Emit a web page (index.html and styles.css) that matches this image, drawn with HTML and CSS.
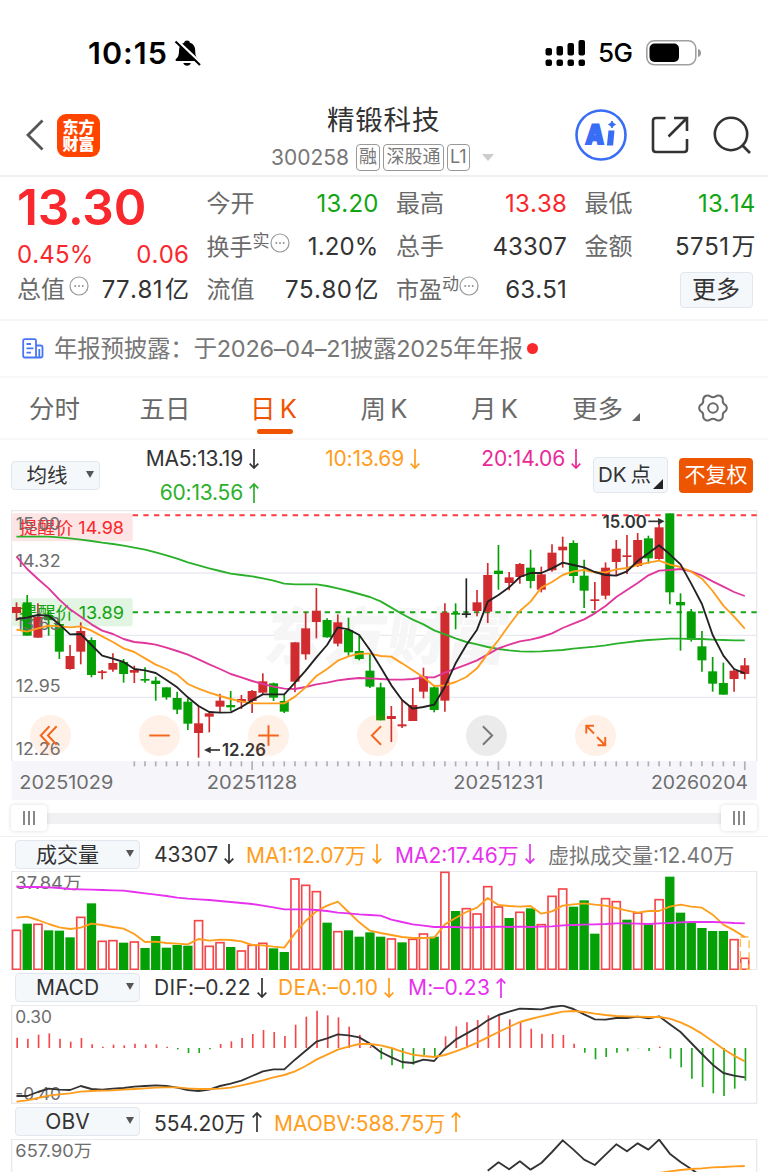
FILE: index.html
```html
<!DOCTYPE html>
<html lang="zh-CN">
<head>
  <meta charset="UTF-8" />
  <meta name="viewport" content="width=device-width, initial-scale=1.0" />
  <title>精锻科技 300258</title>
  <link rel="stylesheet" href="styles.css">
</head>
<body>
  <svg class="defs" width="0" height="0">
    <symbol id="down" viewBox="0 0 10 20"><path d="M5 0V19M.7 14.6L5 19l4.300-4.400" /></symbol>
    <symbol id="up" viewBox="0 0 10 20"><path d="M5 20V1M.7 5.400L5 1l4.300 4.400" /></symbol>
    <symbol id="dots" viewBox="0 0 20 20">
      <circle cx="10" cy="10" r="9" />
      <path d="M5.500 10h1.600M9.200 10h1.600M12.900 10h1.600" stroke-width="1.800" />
    </symbol>
  </svg>

  <!-- Phone status bar -->
  <div class="statusbar">
    <span class="time">10:15</span>
    <svg class="bell" width="27" height="28" viewBox="0 0 27 28">
      <path d="M13 1.500c1.700 0 2.600.9 2.900 2.200 3.700 1 5.300 4 5.300 8 0 5 1.300 6.600 3.200 8.300.6.600.3 1.900-.8 1.900H2.700c-1.200 0-1.500-1.300-.8-1.900 2-1.700 3.100-3.300 3.100-8.300 0-4 1.700-7 5.200-8C10.500 2.400 11.400 1.500 13 1.500zM9.300 24h7.500c-.4 1.700-1.900 2.800-3.700 2.800S9.800 25.700 9.300 24z" />
      <path d="M3 1.500L27 24" stroke="#fff" stroke-width="2.400" />
      <path d="M1.500 2.500L26 26" stroke="#000" stroke-width="2" />
    </svg>
    <svg class="signal" width="40" height="28" viewBox="0 0 40 28">
      <g>
        <rect x="0.500" y="9" width="6.500" height="7.500" rx="2" /><rect x="11.500" y="7" width="6.500" height="9.500" rx="2" />
        <rect x="22.500" y="4" width="6.500" height="12.500" rx="2" /><rect x="33.500" y="1" width="6.500" height="15.500" rx="2" />
        <rect x="0.500" y="20.500" width="6.500" height="6.500" rx="2" /><rect x="11.500" y="20.500" width="6.500" height="6.500" rx="2" />
        <rect x="22.500" y="20.500" width="6.500" height="6.500" rx="2" /><rect x="33.500" y="20.500" width="6.500" height="6.500" rx="2" />
      </g>
    </svg>
    <span class="net">5G</span>
    <svg class="battery" width="56" height="26" viewBox="0 0 56 26">
      <rect x=".8" y=".8" width="49" height="24" rx="7.500" fill="none" stroke="#a0a0a0" stroke-width="1.600" />
      <rect x="3.500" y="3.500" width="29.500" height="18.500" rx="5" />
      <path d="M52 9c2 .5 3 2 3 4s-1 3.500-3 4z" fill="#999" />
    </svg>
  </div>

  <!-- Title bar -->
  <div class="titlebar">
    <svg class="back" width="18" height="32" viewBox="0 0 18 32"><path d="M16.500 1.500L2 16l14.500 14.500" /></svg>
    <div class="logo">东方<br>财富</div>
    <div class="title">
      <h1>精锻科技</h1>
      <div class="code">
        <span>300258</span><i>融</i><i class="wide">深股通</i><i>L1</i><b class="caret"></b>
      </div>
    </div>
    <div class="tools">
      <svg width="52" height="52" viewBox="0 0 52 52">
        <circle cx="26" cy="26" r="24.500" fill="none" stroke="#3a6df6" stroke-width="2.600" />
        <text class="ai" x="10" y="35.500" textLength="18.500" lengthAdjust="spacingAndGlyphs" transform="skewX(-3) translate(2 0)">A</text>
        <path d="M33.500 21.500h6l-1.400 15h-6.200z" fill="#3a6df6" />
        <path d="M37 12l1.200 2.300 2.300 1.200-2.300 1.200L37 19l-1.200-2.300-2.300-1.200 2.300-1.200z" fill="#3a6df6" stroke="#3a6df6" />
      </svg>
      <svg class="line" width="38" height="38" viewBox="0 0 38 38">
        <path d="M14.500 2H5Q2 2 2 5V33Q2 36 5 36H33Q36 36 36 33V23M23 2H36V15M36 2L17.500 20.500" />
      </svg>
      <svg class="line" width="38" height="38" viewBox="0 0 38 38">
        <circle cx="18" cy="18" r="16.200" /><path d="M29 29l8 8" />
      </svg>
    </div>
  </div>

  <!-- Quote summary -->
  <div class="quote">
    <div class="col">
      <div class="price">13.30</div>
      <div class="cell change red"><span>0.45%</span><span>0.06</span></div>
      <div class="cell"><label>总值<svg class="dots"><use href="#dots" /></svg></label><span class="unit">77.81<em>亿</em></span></div>
    </div>
    <div class="col">
      <div class="cell"><label>今开</label><span class="green">13.20</span></div>
      <div class="cell"><label class="tight">换手<sup>实</sup><svg class="dots"><use href="#dots" /></svg></label><span>1.20%</span></div>
      <div class="cell"><label>流值</label><span class="unit">75.80<em>亿</em></span></div>
    </div>
    <div class="col">
      <div class="cell"><label>最高</label><span class="red">13.38</span></div>
      <div class="cell"><label>总手</label><span>43307</span></div>
      <div class="cell"><label class="tight">市盈<sup>动</sup><svg class="dots"><use href="#dots" /></svg></label><span>63.51</span></div>
    </div>
    <div class="col">
      <div class="cell"><label>最低</label><span class="green">13.14</span></div>
      <div class="cell"><label>金额</label><span class="unit">5751<em>万</em></span></div>
      <div class="cell end"><button class="more">更多</button></div>
    </div>
  </div>

  <div class="news">
    <svg width="22" height="21" viewBox="0 0 22 21">
      <path d="M1.200 2.700Q1.200 1.200 2.700 1.200H12.500Q14 1.200 14 2.700V19.500H2.700Q1.200 19.500 1.200 18zM14 7.500H18.500Q20.500 7.500 20.500 9.500V17.500Q20.500 19.500 18.500 19.500H14M17.300 11V19M4.500 6h4.500M4.500 10.300h7M4.500 14.600h4.500" />
    </svg>
    <span>年报预披露：于2026–04–21披露2025年年报</span>
    <b></b>
  </div>

  <!-- Period tabs -->
  <div class="tabs">
    <span>分时</span>
    <span>五日</span>
    <span class="active">日 K</span>
    <span>周 K</span>
    <span>月 K</span>
    <span class="drop">更多</span>
    <svg class="gear" width="30" height="30" viewBox="0 0 30 30">
      <g transform="rotate(90 15 15)">
        <path d="M12.200 2.200Q15 .2 17.800 2.200Q19.300 5.600 22.800 5.200Q26 5 27.200 8Q28.200 10.500 26.600 12.300Q24.800 15 26.600 17.700Q28.200 19.500 27.200 22Q26 25 22.800 24.800Q19.300 24.400 17.800 27.800Q15 29.800 12.200 27.800Q10.700 24.400 7.200 24.800Q4 25 2.800 22Q1.800 19.500 3.400 17.700Q5.200 15 3.400 12.300Q1.800 10.500 2.800 8Q4 5 7.200 5.200Q10.700 5.600 12.200 2.200z" />
      </g>
      <circle cx="15" cy="15" r="4.800" />
    </svg>
  </div>

  <div class="mabar">
    <button class="select short">均线</button>
    <div class="mas">
      <span>MA5:13.19<svg><use href="#down" /></svg></span>
      <span class="orange">10:13.69<svg><use href="#down" /></svg></span>
      <span class="pink">20:14.06<svg><use href="#down" /></svg></span>
      <span class="lime">60:13.56<svg><use href="#up" /></svg></span>
    </div>
    <button class="dk">DK 点</button>
    <button class="adjust">不复权</button>
  </div>

  <!-- Candles, drawn by chart.js; every chart uses 3 units per pixel -->
  <div class="kline">
    <svg id="kline" width="768" height="290" viewBox="0 15 2304 870"></svg>
    <div class="controls">
      <b><svg viewBox="0 0 40 40"><path d="M19 11l-8.500 9 8.500 9M26 11l-8.500 9 8.500 9" /></svg></b>
      <b><svg viewBox="0 0 40 40"><path d="M10 20h20" /></svg></b>
      <b><svg viewBox="0 0 40 40"><path d="M10 20h20M20 10v20" /></svg></b>
      <b><svg viewBox="0 0 40 40"><path d="M23.500 11l-9 9 9 9" /></svg></b>
      <b class="off"><svg viewBox="0 0 40 40"><path d="M16.500 11l9 9-9 9" /></svg></b>
      <b><svg viewBox="0 0 40 40"><path d="M18.500 10.500H11V18M11 10.500l7.500 7.500M29.500 21.500V29.500H22M29.500 29.500L21.500 21.500" /></svg></b>
    </div>
  </div>

  <div class="slider"><b></b><b></b></div>

  <div class="indicator first">
    <button class="select">成交量</button>
    <span class="v1">43307<svg><use href="#down" /></svg></span>
    <span class="v2 orange">MA1:12.07万<svg><use href="#down" /></svg></span>
    <span class="v3 magenta">MA2:17.46万<svg><use href="#down" /></svg></span>
    <span class="v4 gray">虚拟成交量:12.40万</span>
  </div>
  <svg id="volume" width="768" height="99" viewBox="0 109 2304 297"></svg>

  <div class="indicator macd">
    <button class="select">MACD</button>
    <span class="m1">DIF:–0.22<svg><use href="#down" /></svg></span>
    <span class="m2 orange">DEA:–0.10<svg><use href="#down" /></svg></span>
    <span class="m3 magenta">M:–0.23<svg><use href="#up" /></svg></span>
  </div>
  <svg id="macd" width="768" height="99" viewBox="0 511 2304 297"></svg>

  <div class="indicator">
    <button class="select">OBV</button>
    <span class="o1">554.20万<svg><use href="#up" /></svg></span>
    <span class="o2 orange">MAOBV:588.75万<svg><use href="#up" /></svg></span>
  </div>
  <svg id="obv" width="768" height="33" viewBox="0 913 2304 99"></svg>

  <script src="chart.js"></script>
</body>
</html>
```
FILE: styles.css
```css
* {
  box-sizing: border-box;
}
body {
  margin: 0;
  width: 768px;
  height: 1172px;
  overflow: hidden;
  background: #fff;
  color: #333;
  font-family: Inter, "Noto Sans CJK SC", sans-serif;
  font-size: 24px;
}
svg {
  display: block;
  flex: none;
}
.defs {
  position: absolute;
}
button {
  font: inherit;
  color: inherit;
  padding: 0;
  border: 1px solid #e2e6ee;
  border-radius: 4px;
  background: #f5f8fb;
}
i, b, em {
  font-style: normal;
}
.red { color: #f8282c; }
.green { color: #12a512; }
.orange { color: #ff9d1c; }
.pink { color: #e92a97; }
.lime { color: #2bb02b; }
.magenta { color: #e632ee; }
.gray { color: #777; }

/* Status bar */
.statusbar {
  display: flex;
  align-items: center;
  height: 88px;
  padding: 17px 0 0 88px;
  color: #000;
}
.time {
  width: 86px;
  font-size: 30.5px;
  font-weight: 600;
  letter-spacing: 1px;
}
.signal {
  margin-left: 344px;
}
.net {
  width: 48px;
  margin-left: 13px;
  font-size: 26px;
  font-weight: 500;
  letter-spacing: -0.5px;
}

/* Title bar */
.titlebar {
  display: flex;
  align-items: center;
  height: 89px;
  padding: 7px 17px 0 26px;
  border-bottom: 2px solid #efeff0;
}
.back {
  fill: none;
  stroke: #555;
  stroke-width: 2.8;
}
.logo {
  width: 43px;
  height: 43px;
  margin-left: 13px;
  padding-top: 4px;
  border-radius: 9px;
  background: #ff4400;
  color: #fff;
  font-family: "Noto Sans CJK SC", sans-serif;
  font-size: 16px;
  font-weight: 900;
  line-height: 17.5px;
  text-align: center;
}
.title {
  width: 228px;
  margin: 6px 0 0 171px;
}
h1 {
  margin: 0;
  padding-left: 56px;
  font-size: 27.5px;
  line-height: 38px;
  font-weight: 400;
  letter-spacing: 0.8px;
}
.code {
  display: flex;
  align-items: center;
  height: 36px;
  color: #777;
  font-size: 21px;
}
.code span {
  width: 85px;
}
.code i {
  height: 27px;
  margin-right: 3px;
  padding: 0 2px;
  border: 1.5px solid #999;
  border-radius: 4px;
  font-size: 18px;
  line-height: 23px;
}
.code .wide {
  padding: 0 2.5px;
}
.caret {
  margin-left: 9px;
  border: 6px solid transparent;
  border-top: 7px solid #ccc;
  border-bottom: 0;
}
.tools {
  display: flex;
  align-items: center;
  gap: 24px;
  margin-left: auto;
}
.line {
  fill: none;
  stroke: #333;
  stroke-width: 2.6;
}
.ai {
  fill: #3a6df6;
  stroke: #3a6df6;
  stroke-width: 2;
  font-size: 27px;
  font-weight: 900;
}

/* Quote summary */
.quote {
  display: grid;
  grid-template-columns: 172px 172px 171px 171px;
  column-gap: 17.5px;
  height: 144px;
  padding: 5px 0 0 17px;
  border-bottom: 2px solid #f6f6f7;
}
.cell {
  display: flex;
  justify-content: space-between;
  align-items: center;
  height: 43px;
  line-height: 36px;
  white-space: nowrap;
}
.cell span {
  letter-spacing: 0.15px;
  font-kerning: none;
}
.cell .unit {
  display: flex;
  letter-spacing: 0.5px;
}
.unit em {
  margin-left: 2px;
  letter-spacing: 0;
}
.cell label {
  display: flex;
  align-items: center;
  gap: 4px;
  margin-top: 1px;
  color: #6a6a6a;
}
.cell label.tight {
  font-size: 23px;
  gap: 0;
}
.price {
  height: 52px;
  color: #f8282c;
  font-size: 49.5px;
  font-weight: 600;
  line-height: 51px;
  letter-spacing: -0.2px;
}
.cell.change {
  height: 34px;
  padding-top: 7px;
}
.cell sup {
  position: relative;
  top: -6px;
  font-size: 17px;
  line-height: 1;
}
.dots {
  width: 20px;
  height: 20px;
  margin: -8px 0 0 0;
  fill: none;
  stroke: #999;
  stroke-width: 1.2;
}
.cell.end {
  justify-content: flex-end;
}
.more {
  width: 73px;
  height: 36px;
  margin-right: 3px;
  line-height: 32px;
}

.news {
  display: flex;
  align-items: center;
  height: 57px;
  padding-left: 22px;
  border-bottom: 2px solid #f8f8f9;
  color: #777;
  font-size: 23.5px;
}
.news span {
  margin-top: -3px;
  letter-spacing: -0.25px;
}
.news svg {
  margin-right: 10px;
  fill: none;
  stroke: #4776f5;
  stroke-width: 1.8;
}
.news b {
  width: 11px;
  height: 11px;
  margin-left: 4px;
  border-radius: 50%;
  background: #f8282c;
}

/* Tabs */
.tabs {
  display: flex;
  align-items: center;
  height: 62px;
  padding-left: 29px;
  border-bottom: 2px solid #f8f8f9;
  color: #6a6a6a;
  font-size: 25.5px;
  word-spacing: -3px;
}
.tabs span {
  position: relative;
  width: 110.5px;
  margin-top: -4px;
  white-space: nowrap;
}
.tabs span:nth-child(5) {
  width: 101px;
}
.tabs .active {
  color: #f05400;
}
.tabs .active::after {
  content: "";
  position: absolute;
  left: 7px;
  bottom: -9px;
  width: 36px;
  height: 5px;
  border-radius: 3px;
  background: #f05400;
}
.tabs .drop {
  width: 126px;
}
.drop::after,
.dk::after {
  content: "";
  position: absolute;
  left: 60px;
  bottom: 4px;
  border: 4px solid #666;
  border-top-color: transparent;
  border-left-color: transparent;
}
.gear {
  fill: none;
  stroke: #6a6a6a;
  stroke-width: 2;
}

/* Moving averages */
.mabar {
  display: flex;
  align-items: center;
  height: 70px;
  padding-left: 11px;
  font-size: 21px;
}
.select {
  position: relative;
  width: 125px;
  height: 29px;
  padding-right: 20px;
  font-size: 21px;
  line-height: 25px;
}
.select.short {
  width: 89px;
  padding-right: 17px;
  font-size: 20.5px;
}
.select::after {
  content: "";
  position: absolute;
  right: 5px;
  top: 9px;
  border: 4px solid transparent;
  border-top: 7px solid #555;
  border-bottom: 0;
}
.mas {
  display: grid;
  grid-template-columns: 159px 161px 161px;
  grid-auto-rows: 34px;
  width: 493px;
  margin-top: 1px;
  letter-spacing: -0.2px;
}
.mas span {
  display: flex;
  justify-content: flex-end;
  align-items: center;
}
.mas svg,
.indicator svg {
  width: 10px;
  height: 20px;
  margin-left: 6px;
  fill: none;
  stroke: currentColor;
  stroke-width: 1.7;
}
.dk {
  position: relative;
  width: 75px;
  height: 36px;
  padding-right: 12px;
  font-size: 20.5px;
  line-height: 34px;
  word-spacing: -2px;
}
.dk::after {
  left: 59px;
  bottom: 3px;
  border-width: 5px;
  border-right-color: #222;
  border-bottom-color: #222;
}
.adjust {
  width: 74px;
  height: 35px;
  margin-left: 11px;
  border: 0;
  background: #ee5500;
  color: #fff;
  line-height: 32px;
}

/* Candle chart */
.kline {
  position: relative;
  height: 290px;
}
.controls {
  position: absolute;
  left: 30px;
  top: 205px;
  display: flex;
  gap: 68px;
}
.controls b {
  width: 41px;
  height: 41px;
  border-radius: 50%;
  background: rgba(255, 106, 26, 0.1);
}
.controls svg {
  fill: none;
  stroke: #f3671c;
  stroke-width: 1.9;
}
.controls .off {
  background: rgba(0, 0, 0, 0.08);
}
.controls .off svg {
  stroke: #777;
}
.slider {
  display: flex;
  justify-content: space-between;
  align-items: center;
  height: 36px;
  margin: 0 11px;
  background: linear-gradient(#f1f1f4, #f1f1f4) 0 13px / 100% 11px no-repeat;
}
.slider b {
  width: 36px;
  height: 26px;
  border-radius: 4px;
  background: linear-gradient(90deg, #888 2px, transparent 2px 5px, #888 5px 7px, transparent 7px 10px, #888 10px 12px) 12px 6px / 12px 14px no-repeat #fff;
  box-shadow: 0 0 4px rgba(0, 0, 0, 0.14);
}

/* Indicator headers */
.indicator {
  display: flex;
  align-items: center;
  height: 35px;
  padding-left: 15px;
  font-size: 21px;
  white-space: nowrap;
}
.indicator.first {
  border-top: 1px solid #efeff4;
}
.indicator.macd {
  letter-spacing: 0.3px;
}
.indicator span {
  display: flex;
  align-items: center;
}
.indicator .select {
  margin-right: 14px;
}
.v1 { width: 92px; }
.v2 { width: 149px; }
.v3 { width: 153px; }
.m1 { width: 124px; }
.m2 { width: 130px; }
.o1 { width: 120px; }

/* Chart drawing */
.frame {
  fill: none;
  stroke: #e9e9f0;
  stroke-width: 4;
}
.axis-text {
  fill: #6e6e6e;
  font-size: 51px;
}
.plot {
  fill: none;
  stroke-width: 5.6;
  stroke-linejoin: round;
}
.watermark {
  fill: #f6f6f7;
  font-size: 185px;
  font-weight: 900;
}
.mark {
  fill: #333;
  font-size: 51px;
  font-weight: 600;
}
```
FILE: chart.js
```js
var STEP = 32.13;
var RED = '#d02c30', GREEN = '#05a005', LINE_RED = '#f4474b';

function x(i) {
  return 49.5 + i * STEP;
}

function rect(left, top, w, h, attrs) {
  return '<rect x="' + left.toFixed(1) + '" y="' + top + '" width="' + w + '" height="' + h + '" ' + (attrs || '') + '/>';
}

function seg(x1, y1, x2, y2, color, w, extra) {
  return '<path d="M' + x1 + ' ' + y1 + 'L' + x2 + ' ' + y2 + '" stroke="' + color + '" stroke-width="' + w + '" fill="none" ' + (extra || '') + '/>';
}

function text(left, y, w, str, cls, extra) {
  return '<text class="' + cls + '" x="' + left + '" y="' + y + '" textLength="' + w + '" lengthAdjust="spacingAndGlyphs" ' + (extra || '') + '>' + str + '</text>';
}

// Polyline through one value per trading day
function plot(values, color, start) {
  var pts = values.map(function(v, i) {
    return x(i + (start || 0)).toFixed(1) + ',' + v;
  });
  return '<polyline class="plot" stroke="' + color + '" points="' + pts.join(' ') + '"/>';
}

function frame(top, h) {
  return rect(35, top, 2235, h, 'class="frame"');
}

// color, high, body top, body bottom, low
var candles = [
  'r 292 306 324 348', 'g 270 292 392 392', 'r 295 336 398 398', 'g 318 330 345 392', 'g 345 357 440 462',
  'r 420 453 492 494', 'r 352 378 440 478', 'g 397 405 510 517', 'r 495 499 503 523', 'r 445 474 494 500',
  'g 462 471 507 533', 'r 482 495 503 534', 'g 487 522 526 533', 'g 515 527 537 587', 'g 547 547 577 584',
  'g 560 579 614 627', 'g 580 590 656 675', 'r 602 655 684 758', 'r 622 625 635 682', 'r 566 587 605 622',
  'g 558 600 607 618', 'r 570 582 592 612', 'r 555 558 588 624', 'r 505 529 563 570', 'g 533 535 578 588',
  'g 568 588 620 624', 'r 412 412 530 562', 'r 322 370 448 464', 'r 249 317 351 400', 'g 340 345 397 398',
  'r 328 352 416 424', 'g 338 375 442 452', 'g 392 438 462 466', 'g 444 497 545 549', 'g 533 547 646 646',
  'r 603 633 642 711', 'r 585 658 664 669', 'r 549 600 648 648', 'r 488 514 560 580', 'g 542 547 615 622',
  'r 295 323 587 620', 'g 295 324 329 373', 'k 220 325 330 338', 'r 255 292 318 334', 'r 174 210 320 354',
  'g 120 197 207 254', 'r 201 217 234 256', 'r 174 177 216 236', 'g 134 188 228 250', 'r 185 208 254 262',
  'r 118 143 196 200', 'r 95 125 136 188', 'g 106 114 213 234', 'g 164 212 257 309', 'r 231 283 287 316',
  'r 172 188 272 283', 'r 105 131 171 210', 'r 90 151 155 207', 'r 84 105 183 186', 'g 92 100 160 176',
  'r 57 67 162 164', 'g 25 25 262 298', 'g 265 291 301 437', 'g 312 320 404 410', 'g 378 424 466 500',
  'g 456 499 536 560', 'g 473 534 569 569', 'r 492 497 522 560', 'r 459 481 507 523'
];
var ma5 = [342,338,330,332,358,388,387,420,452,461,471,492,496,504,525,547,577,603,621,623,622,606,586,568,568,568,533,497,457,420,367,373,390,435,487,541,585,611,606,599,545,475,420,374,290,270,247,216,204,204,190,173,180,187,201,210,212,199,168,145,121,148,178,236,297,390,452,492,505];
var ma10 = [374,380,370,362,364,367,364,377,394,411,430,441,460,479,492,509,537,551,563,573,582,589,595,595,595,595,575,547,513,492,467,454,446,446,453,455,475,496,517,543,541,531,516,490,446,405,360,318,290,248,231,210,199,195,202,202,193,189,180,173,167,179,186,200,221,258,302,335,371];
var ma20 = [155,192,222,250,284,313,335,358,377,387,402,411,414,419,428,438,449,463,478,492,507,517,528,537,545,551,552,546,538,533,526,522,519,520,522,524,524,522,517,517,503,491,479,466,448,430,419,409,404,396,385,369,356,343,325,303,276,255,234,211,197,195,192,199,212,229,245,261,273];
var ma60 = [95,95,95,95,97,100,104,108,113,117,122,128,134,142,151,161,172,181,190,198,206,210,214,220,227,236,238,238,238,243,250,258,267,276,289,308,327,344,358,376,388,400,411,418,426,432,436,439,440,439,437,435,431,428,425,421,416,412,408,405,403,401,401,402,402,404,405,406,406];

function drawKline() {
  var s = rect(35, 768, 2235, 117, 'fill="#f6f6fa"');
  [204, 391, 577].forEach(function(y) { s += seg(35, y, 2270, y, '#e9e9f1', 4); });
  s += '<path class="frame" d="M35 768V17H2270V768"/>';
  s += text(860, 462, 730, '东方财富', 'watermark', 'transform="skewX(-9)"');

  // price alerts
  s += rect(36, 25, 362, 84, 'rx="6" fill="#fde4e5"') + rect(36, 280, 362, 84, 'rx="6" fill="#e2f4e2"');
  s += text(58, 88, 314, '提醒价 14.98', 'alert', 'fill="#f8282c" font-size="52"');
  s += text(58, 343, 314, '提醒价 13.89', 'alert', 'fill="#12a512" font-size="52"');
  s += seg(398, 31, 2270, 31, '#fa3c40', 6, 'stroke-dasharray="16 16"');
  s += seg(398, 322, 2270, 322, '#1aa51a', 6, 'stroke-dasharray="16 16"');

  candles.forEach(function(row, i) {
    var p = row.split(' ');
    var color = p[0] === 'r' ? RED : p[0] === 'g' ? GREEN : '#222';
    s += seg(x(i), p[1], x(i), p[4], color, 5);
    s += rect(x(i) - 13.5, p[2], 27, Math.max(p[3] - p[2], 5), 'fill="' + color + '"');
  });

  s += text(47, 74, 134, '15.00', 'axis-text') + text(47, 187, 135, '14.32', 'axis-text');
  s += text(47, 375, 135, '13.63', 'axis-text') + text(47, 562, 135, '12.95', 'axis-text') + text(47, 750, 135, '12.26', 'axis-text');
  s += plot(ma60, '#2bb02b') + plot(ma20, '#e0379b') + plot(ma10, '#ff9d1c') + plot(ma5, '#222');

  s += text(1808, 68, 132, '15.00', 'mark') + seg(1945, 49, 1980, 49, '#333', 5) + '<path d="M1974 39l20 10-20 10z" fill="#333"/>';
  s += text(666, 754, 132, '12.26', 'mark') + seg(626, 735, 660, 735, '#333', 5) + '<path d="M632 725l-20 10 20 10z" fill="#333"/>';

  // date axis
  for (var i = 11; i <= 68; i++) {
    var major = i === 22 || i === 45 || i === 68;
    s += seg(x(i), 769, x(i), major ? 795 : 784, '#b0b0b4', 5);
  }
  s += text(58, 852, 282, '20251029', 'axis-text', 'style="font-size:56px"');
  s += text(620, 852, 272, '20251128', 'axis-text', 'style="font-size:56px"');
  s += text(1360, 852, 270, '20251231', 'axis-text', 'style="font-size:56px"');
  s += text(1953, 852, 291, '20260204', 'axis-text', 'style="font-size:56px"');
  document.getElementById('kline').innerHTML = s;
}

var volumes = 'r286 g267 r268 g287 g288 g308 r247 g206 r319 r317 g324 r321 g340 g304 g339 g331 g333 r257 r334 r323 g337 r348 r331 r325 g341 g352 r132 r151 r170 g264 r290 g287 g306 g293 g306 r312 g323 r313 r297 g306 r112 g229 r221 r237 r155 r216 g250 r232 g221 r269 r184 r162 g216 g197 g297 r191 r200 g255 r234 g269 r194 g126 g234 g264 g280 g289 g289 r314 r370'.split(' ');
var volMa1 = [249,246,256,268,278,283,279,267,271,277,282,298,322,321,325,327,329,313,318,315,316,320,331,332,336,339,296,259,230,213,201,232,263,288,295,301,307,310,310,309,269,250,232,219,190,211,214,216,214,237,230,213,209,206,210,213,220,228,234,229,229,216,210,216,219,240,270,287,307];
var volMa2 = [156,157,157,158,160,163,164,165,166,167,168,172,176,180,184,189,192,194,196,199,202,205,208,213,218,224,224,224,226,229,234,236,239,241,243,255,262,269,273,277,277,277,279,278,277,276,277,276,277,276,275,272,271,270,269,268,266,266,267,268,266,265,263,262,262,262,263,265,266];

function drawVolume() {
  var s = frame(110, 295);
  volumes.forEach(function(v, i) {
    var top = +v.slice(1);
    if (v[0] === 'g') {
      s += rect(x(i) - 14, top, 28, 407 - top, 'fill="' + GREEN + '"');
    } else {
      s += rect(x(i) - 12, top + 1, 24, 403 - top, 'fill="#fff" stroke="' + LINE_RED + '" stroke-width="5"');
    }
  });
  // projected volume of the running day
  s += rect(x(68) - 13, 307, 26, 97, 'fill="none" stroke="#ffb84d" stroke-width="4" stroke-dasharray="24 12"');
  s += text(46, 162, 198, '37.84万', 'axis-text');
  s += plot(volMa1, '#ff9d1c') + plot(volMa2, '#e632ee');
  document.getElementById('volume').innerHTML = s;
}

var hist = [609,612,600,596,612,621,610,629,636,630,632,627,629,629,636,644,655,655,644,628,620,610,598,586,592,604,570,546,528,542,548,576,600,635,674,692,702,690,662,665,605,575,563,556,542,540,554,561,582,597,598,601,627,654,674,667,654,650,641,649,636,672,698,732,757,776,784,762,738];
var dif = [784,784,772,762,765,766,754,763,765,762,760,756,754,752,754,759,766,769,765,754,747,738,724,710,704,704,675,648,621,611,599,602,608,627,652,668,682,685,675,679,642,615,597,579,557,541,531,522,523,524,517,513,523,539,554,555,550,550,546,551,545,569,592,625,658,690,715,723,728];
var dea = [801,797,790,783,779,776,771,769,768,767,765,763,761,759,758,758,761,763,763,762,759,752,745,737,728,721,710,694,675,660,645,636,628,628,632,640,651,660,664,667,661,650,638,624,608,592,577,562,553,545,538,531,529,532,537,541,544,545,546,547,547,552,563,578,597,620,643,663,680];

function drawMacd() {
  var s = frame(512, 294);
  hist.forEach(function(v, i) {
    s += seg(x(i) + 2, 640, x(i) + 2, v, v < 640 ? LINE_RED : '#1fa81f', 5);
  });
  s += text(46, 564, 110, '0.30', 'axis-text') + text(46, 795, 137, '-0.40', 'axis-text');
  s += plot(dif, '#333') + plot(dea, '#ff9d1c');
  document.getElementById('macd').innerHTML = s;
}

function drawObv() {
  var s = frame(914, 200);
  s += text(46, 966, 230, '657.90万', 'axis-text');
  s += plot([1008,983,1004,980,1005,985,952,917,945,975,991,960,929,950,926,945,915,957,982,1003,1026], '#333', 44);
  s += plot([1015,1010,1006,1003,1001,998,997,995,994], '#ff9d1c', 60);
  document.getElementById('obv').innerHTML = s;
}

drawKline();
drawVolume();
drawMacd();
drawObv();
```
